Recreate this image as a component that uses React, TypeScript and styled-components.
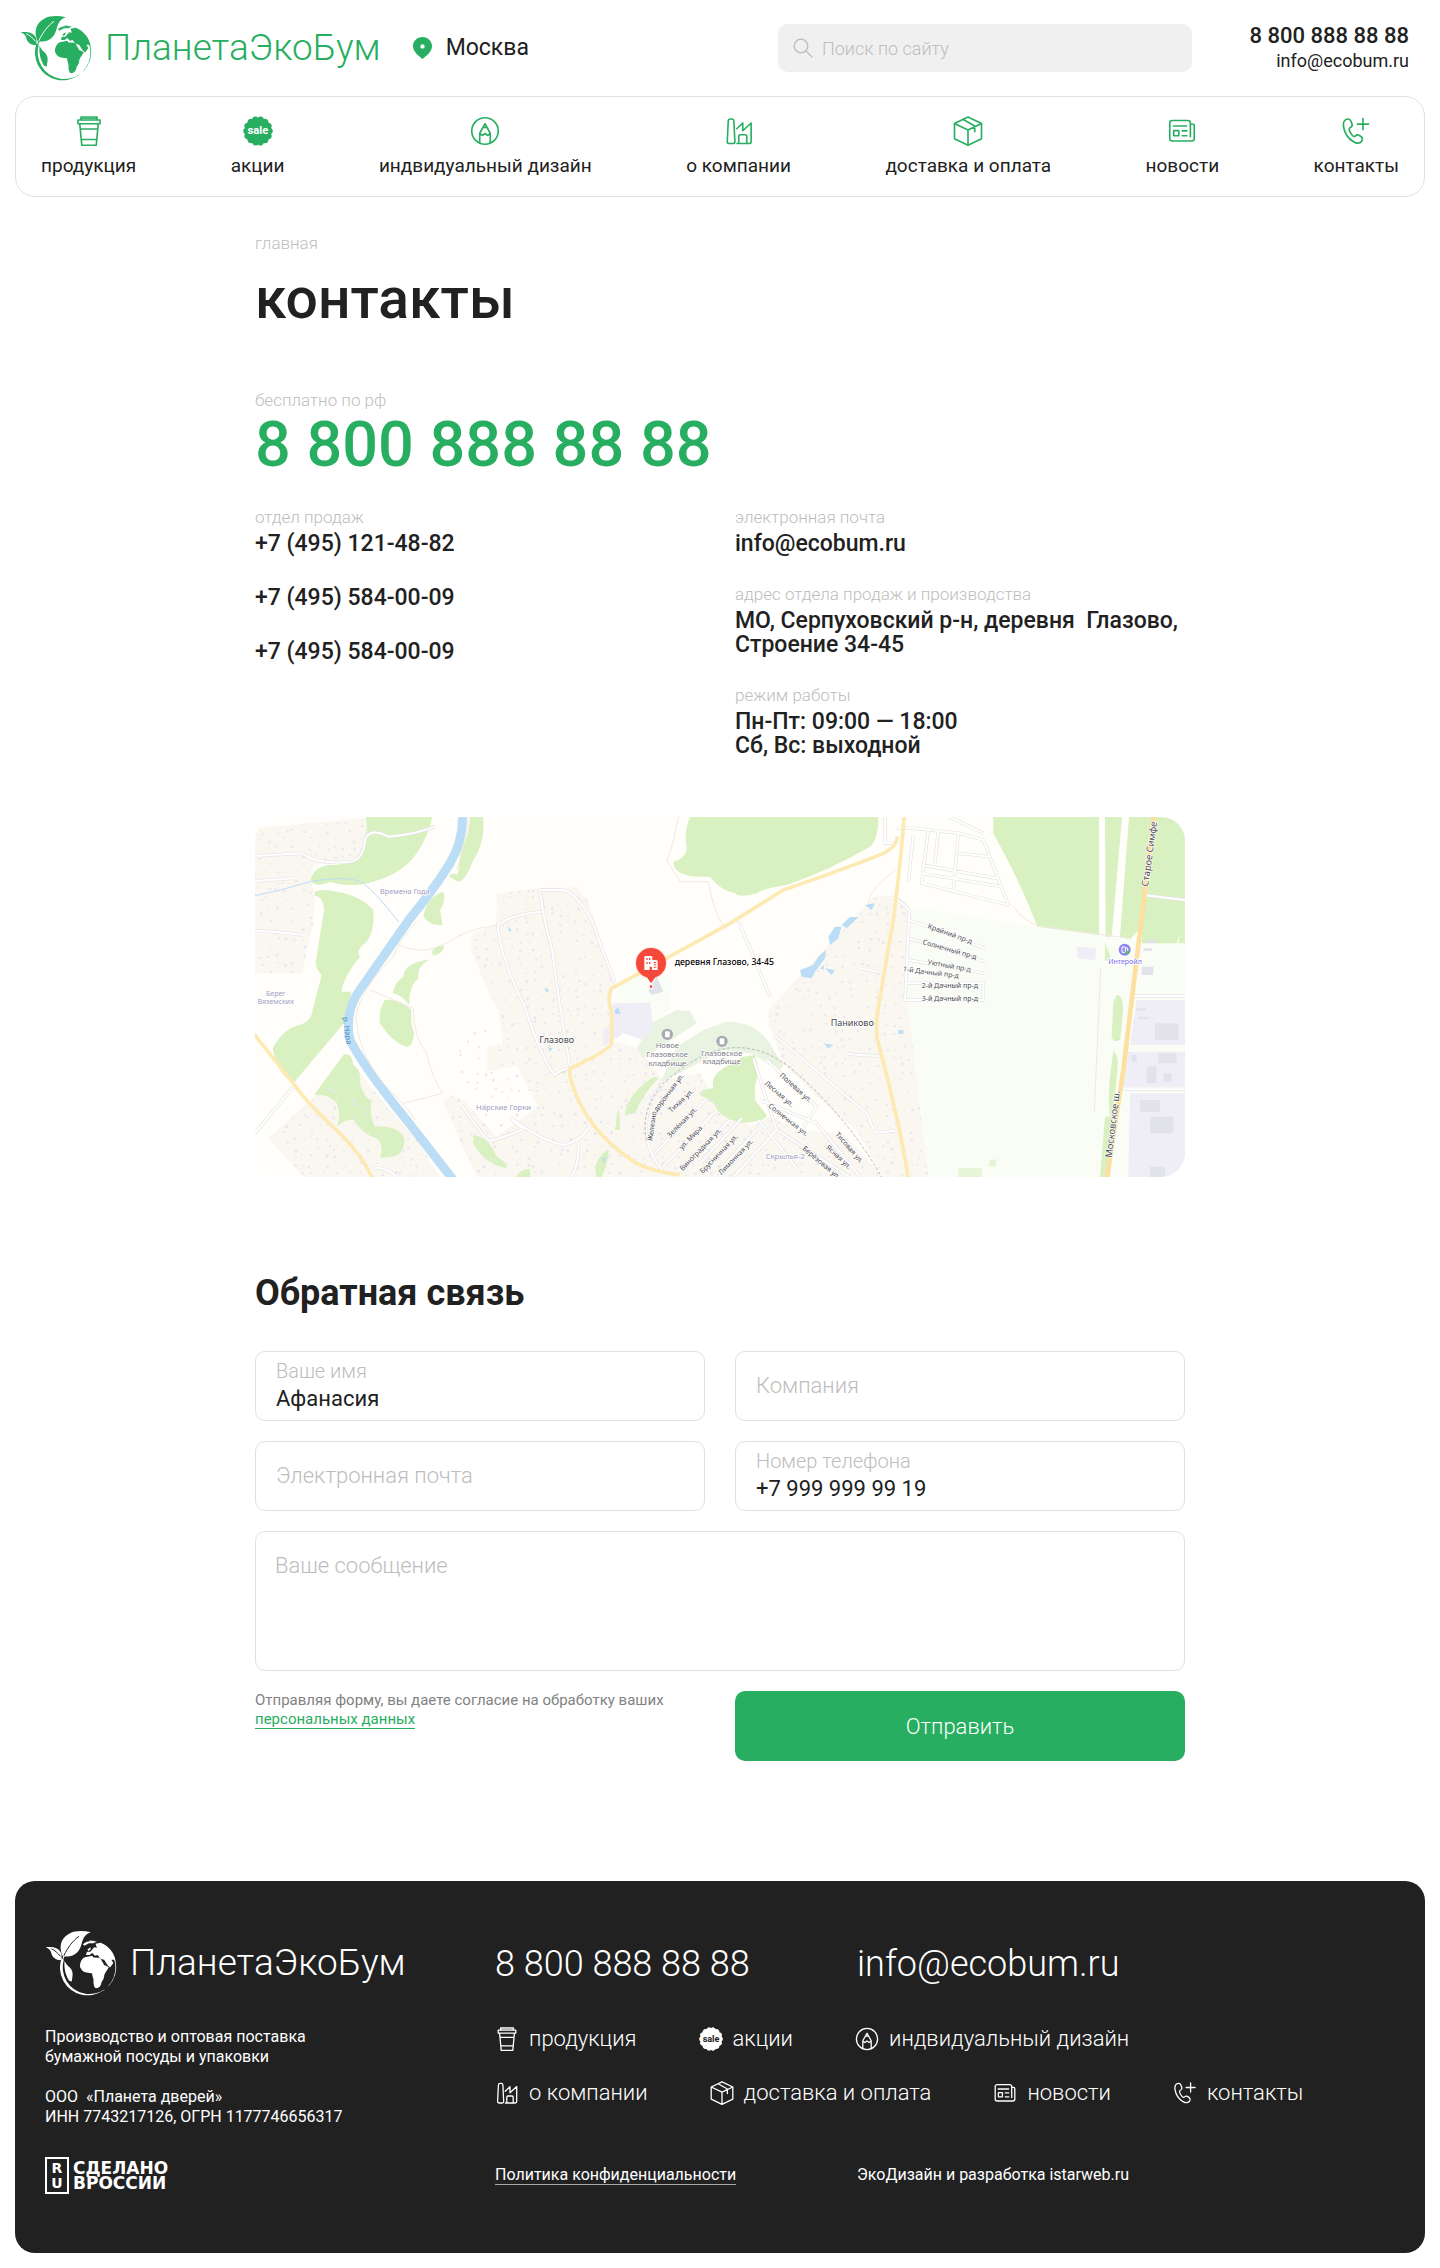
import React from "react";
import styled, { createGlobalStyle, css } from "styled-components";

const GREEN = "#27ae60";
const INK = "#212121";
const MUTED = "#bdbdbd";
const LINE = "#e0e0e0";

const GlobalStyle = createGlobalStyle`
  *, *::before, *::after { box-sizing: border-box; }
  body {
    margin: 0;
    background: #fff;
    color: ${INK};
    font-family: Roboto, "Noto Sans", sans-serif;
    font-weight: 300;
  }
  h1, h2, p, ul { margin: 0; padding: 0; }
  ul { list-style: none; }
  a { color: inherit; text-decoration: none; }
  input, textarea, button { font: inherit; color: inherit; }
`;

/* ---------- icons ---------- */

type IconName = "cup" | "sale" | "design" | "factory" | "box" | "news" | "phone";

const badgePath = (() => {
  const teeth = 14;
  const at = (i: number) => {
    const a = (i / teeth) * Math.PI * 2 - Math.PI / 2;
    return `${(12 + 10.7 * Math.cos(a)).toFixed(2)} ${(12 + 10.7 * Math.sin(a)).toFixed(2)}`;
  };
  let d = `M${at(0)}`;
  for (let i = 1; i <= teeth; i++) d += `A2.7 2.7 0 0 1 ${at(i)}`;
  return d + "Z";
})();

const IconSvg = styled.svg<{ $size: number }>`
  display: block;
  flex: none;
  width: ${(p) => p.$size}px;
  height: ${(p) => p.$size}px;
  fill: none;
  stroke: currentColor;
  stroke-width: 1.3;
  stroke-linejoin: round;
  stroke-linecap: round;
`;

const BadgeText = styled.text`
  font: 700 9px Roboto, sans-serif;
  stroke: none;
`;

function Icon({ name, size, ground }: { name: IconName; size: number; ground: string }) {
  return (
    <IconSvg $size={size} viewBox="0 0 24 24" aria-hidden="true">
      {name === "cup" && (
        <>
          <path d="M5.6 3.2V.8h12.8v2.4M3.2 3.2h17.6v3H3.2zM4.6 6.2l1.6 17.2h11.6l1.6-17.2M5 10.4h14M5.8 18.8h12.4" />
          <path d="M6 1.9h12" strokeWidth=".8" />
        </>
      )}
      {name === "sale" && (
        <>
          <path d={badgePath} fill="currentColor" stroke="none" />
          <BadgeText x="12" y="14.6" textAnchor="middle" fill={ground}>
            sale
          </BadgeText>
        </>
      )}
      {name === "design" && (
        <>
          <circle cx="12" cy="12" r="10.6" />
          <path d="M7.8 21.4v-7.6L12 6.2l4.2 7.6v7.6M7.8 14l2.1 1.5L12 14l2.1 1.5 2.1-1.5M10.6 9.2h2.8" />
        </>
      )}
      {name === "factory" && (
        <path d="M2.6 20.6 3.4 4.2Q3.5 2.4 4.9 2.4h1.4q1.5 0 1.6 1.8l.8 16.4q0 1.4-1.4 1.4H4q-1.4 0-1.4-1.4zM10.2 10.2 15 5.6v6.2l6.7-6.2v15q0 1.400-1.400 1.400H10.400M11.800 22v-5.800q0-1.200 1.200-1.200h4q1.200 0 1.200 1.200V22" />
      )}
      {name === "box" && (
        <path d="M12 .8 22.8 6v12.2L12 23.4 1.2 18.2V6zM1.2 6 12 11.2 22.8 6M12 11.2v12.2M8.2 2.8l9.2 5.2v4.6" />
      )}
      {name === "news" && (
        <>
          <path d="M18.7 16.5V5.6q0-2-2-2H4.2q-2 0-2 2V18q0 2 2 2h15.6q2 0 2-2V7.8q0-1.4-1.4-1.4h-1.700" />
          <path d="M5.2 8h10.4M5.4 11.7h4v4.1h-4zM12.2 11.9h3.6M12.2 15.8h3.6" />
        </>
      )}
      {name === "phone" && (
        <path d="M5.2 2.4C2.2 2.8 1.6 5.8 2 8.6c.8 4.6 4 9.6 8 12 2.6 1.6 5.4 1.6 6.8-.8.6-1.2.4-2.4-.6-3.2l-1.8-1.2c-1.2-.7-2-.4-2.8.5-.8.9-1.6.6-2.6-.5C7.6 13.8 6.8 12.2 6.6 11c-.2-1 .2-1.6 1.200-2 1-.5 1.400-1.400 1-2.600l-.8-2.200c-.5-1.300-1.400-2-2.800-1.800zM17.600 2v9M13.100 6.500h9" />
      )}
    </IconSvg>
  );
}

const menu: { icon: IconName; label: string }[] = [
  { icon: "cup", label: "продукция" },
  { icon: "sale", label: "акции" },
  { icon: "design", label: "индвидуальный дизайн" },
  { icon: "factory", label: "о компании" },
  { icon: "box", label: "доставка и оплата" },
  { icon: "news", label: "новости" },
  { icon: "phone", label: "контакты" },
];

/* ---------- logo ---------- */

const LogoLink = styled.a<{ $color: string }>`
  display: flex;
  align-items: center;
  gap: 12px;
  color: ${(p) => p.$color};
  font-size: 37px;
  line-height: 44px;
  white-space: nowrap;
`;

const LogoMark = styled.svg`
  display: block;
  flex: none;
  width: 73px;
  height: 66px;
`;

function Logo({ color, ground }: { color: string; ground: string }) {
  return (
    <LogoLink href="#" $color={color}>
      <LogoMark viewBox="134 210 219 200" fill="currentColor" aria-hidden="true">
        <path d="M183 296A84 84 0 1 0 268 240V242A81 81 0 1 1 190 300Z" />
        <path d="M192 304C197 312 200 318 208 324C216 332 218 342 216 352L214 366L206 364C196 348 190 328 192 304Z" />
        <path d="M239 322C238 302 250 290 262 291L276 288L280 293L298 294C304 300 308 308 312 316L326 322C322 332 312 342 312 350C312 360 304 364 303 374C300 384 294 388 285 386C281 380 279 372 280 364C280 354 275 350 276 342C268 338 248 344 239 322Z" />
        <path d="M270 276L282 262L290 264L286 252L302 249C328 260 344 282 347 306L342 300L334 300L340 310L330 324L322 316L312 300L302 298L292 286L284 288L276 280L268 286L257 286L260 276Z" />
        <path d="M248 253C258 244 272 241 290 245L280 250L266 250L252 258ZM262 268L272 262L270 270L264 274Z" />
        <path d="M188 292C174 266 178 236 206 221C226 211 250 212 272 217C254 222 248 236 244 252C238 276 222 294 192 290L186 304L183 304Z" />
        <path d="M135 262C156 260 178 264 183 284L183 302C164 302 154 292 152 280C150 270 144 266 135 262Z" />
        <path d="M190 288C202 262 218 242 236 229M180 290C172 280 162 271 152 267" fill="none" stroke={ground} strokeWidth="3" />
      </LogoMark>
      ПланетаЭкоБум
    </LogoLink>
  );
}

/* ---------- header ---------- */

const Page = styled.div`
  padding: 0 15px 15px;
`;

const Header = styled.header`
  display: flex;
  align-items: center;
  height: 96px;
  padding: 0 16px 0 5px;
`;

const City = styled.a`
  display: flex;
  align-items: center;
  gap: 14px;
  margin-left: 32px;
  font-size: 23px;
  font-weight: 400;
  line-height: 28px;
`;

const PinSvg = styled.svg`
  display: block;
  width: 19px;
  height: 22px;
`;

const Search = styled.label`
  display: flex;
  align-items: center;
  gap: 9px;
  width: 414px;
  height: 48px;
  margin-left: auto;
  padding: 0 15px;
  border-radius: 10px;
  background: #f0f0f0;
  color: ${MUTED};

  input {
    flex: 1;
    min-width: 0;
    border: 0;
    padding: 0;
    background: none;
    outline: none;
    font-size: 18px;
    color: ${INK};
  }
  input::placeholder { color: ${MUTED}; opacity: 1; }
`;

const HeaderContacts = styled.address`
  display: flex;
  flex-direction: column;
  align-items: flex-end;
  width: 217px;
  font-style: normal;
  font-size: 18px;
  font-weight: 400;
  line-height: 24px;

  a:first-child { font-size: 22px; font-weight: 500; line-height: 26px; }
`;

const Nav = styled.nav`
  border: 1px solid ${LINE};
  border-radius: 20px;
  padding: 19px 25px 15px;

  ul { display: flex; justify-content: space-between; }
  a {
    display: flex;
    flex-direction: column;
    align-items: center;
    gap: 5px;
    font-size: 19px;
    font-weight: 400;
    line-height: 30px;
  }
  svg { color: ${GREEN}; }
`;

/* ---------- contacts ---------- */

const Main = styled.main`
  max-width: 930px;
  margin: 0 auto;
  padding: 34px 0 120px;
`;

const Caption = styled.span`
  display: block;
  color: ${MUTED};
  font-size: 17px;
  line-height: 24px;
`;

const Title = styled.h1`
  margin-top: 12px;
  font-size: 57px;
  line-height: 64px;
  font-weight: 500;
`;

const Hotline = styled.a`
  display: block;
  color: ${GREEN};
  font-size: 63px;
  line-height: 66px;
  font-weight: 500;
`;

const HotlineBlock = styled.div`
  margin-top: 57px;
`;

const Columns = styled.div`
  display: grid;
  grid-template-columns: 1fr 1fr;
  gap: 30px;
  margin-top: 27px;
`;

const Stack = styled.div<{ $gap: number }>`
  display: flex;
  flex-direction: column;
  gap: ${(p) => p.$gap}px;
`;

const Value = styled.a`
  display: block;
  font-size: 23px;
  line-height: 24px;
  font-weight: 500;
  padding-top: 3px;
`;

const MapFrame = styled.div`
  margin-top: 59px;
  height: 360px;
  border-radius: 24px;
  overflow: hidden;
  background: #fffefa;
`;

const MapSvg = styled.svg`
  display: block;
  width: 100%;
  height: 100%;
  font-family: "Noto Sans", sans-serif;
  font-weight: 400;
`;

/* ---------- map ---------- */

const blocks = [
  "15,55 345,24 350,80 335,140 190,165 182,215 195,250 190,340 155,490 15,490",
  "740,250 870,234 980,232 1015,275 1095,520 1085,560 1080,690 1165,715 1240,810 1350,790 1400,880 1500,950 1560,940 1700,1101 680,1101 580,880 600,855 640,870 740,980 865,890 800,768 712,785 712,712 760,700 745,600 720,560 664,420 664,370 740,345",
  "55,985 190,862 320,770 345,810 420,900 500,990 570,1101 160,1101",
  "1555,600 1870,260 1940,255 1978,290 1970,560 2035,1101 1900,1101 1820,960 1700,860 1600,760 1556,640",
  "1480,960 1560,920 1650,960 1780,970 1900,1101 1400,1101",
];

const streets = [
  "M15 138 155 130Q200 165 300 155Q340 150 345 90Q360 50 415 80Q490 75 555 50M15 213 130 205M15 362Q80 365 160 375M870 240H940Q980 250 1025 330L1095 520M870 240Q880 330 905 410Q930 600 960 770M875 305Q800 310 743 343Q750 440 820 580Q880 760 915 795Q930 780 955 775",
  "M635 885Q690 970 720 993Q800 970 820 955Q780 930 785 925Q870 990 940 1005Q1000 990 1020 945M985 1000Q990 1050 965 1101M15 970 130 830M370 1075Q410 1070 440 1101M1240 820Q1180 880 1190 980Q1200 1040 1240 1085M1215 1030 1370 865M1240 1070 1400 900M1280 1085 1440 930",
  "M1905 21V100H1935M1940 55H1990L2130 70 2200 90 2275 285 2015 220 2035 60M1990 75 1975 215M2065 60 2055 160M2125 70 2110 240M2015 165 2240 205M2015 190 2255 230M2125 130 2220 140M2100 21 2200 70M1925 262Q1980 290 1978 310L1965 570H2200V520H1968M1978 330 2205 415M1978 385 2205 455M1975 450 2205 490",
  "M1830 475 1890 487M1790 732 1880 738M1572 675 1850 910 1875 968 1935 962M1460 320 1560 560M1510 745 1550 870 1580 960 1800 1101M1550 750 1700 890 1660 950M1530 870 1700 940 1830 1101M1525 930 1640 1075M2680 255 2805 270M2640 558H2805M2610 838H2805M1475 925 1350 1060M1520 960 1390 1101M1580 960 1450 1101",
].join("");

function houses() {
  let seed = 11;
  const rnd = () => {
    seed = (seed * 16807) % 2147483647;
    return seed / 2147483647;
  };
  let d = "";
  for (let y = 30; y < 1100; y += 25) {
    for (let x = 20; x < 2040; x += 25) {
      if (rnd() < 0.6) {
        const s = 4 + Math.round(rnd() * 4);
        d += `M${x + Math.round(rnd() * 16)} ${y + Math.round(rnd() * 16)}h${s}v${s}h-${s}z`;
      }
    }
  }
  return d;
}
const housePath = houses();

const tones = {
  dark: "#4a4a50",
  lilac: "#a09dc2",
  grey: "#7c7c86",
  black: "#000",
  violet: "#7a70e8",
  blue: "#4f8cc9",
};

const MapLabel = styled.text<{ $tone?: keyof typeof tones; $size?: number }>`
  font-size: ${(p) => p.$size ?? 21}px;
  fill: ${(p) => tones[p.$tone ?? "dark"]};
  paint-order: stroke;
  stroke: ${(p) => (p.$tone === "blue" ? "none" : "#fff")};
  stroke-width: 4px;
  ${(p) => p.$tone === "black" && css`font-weight: 500;`}
`;

function ContactMap() {
  return (
    <MapSvg viewBox="15 21 2790 1080" preserveAspectRatio="xMidYMid slice" role="img" aria-label="Карта проезда">
      <defs>
        <clipPath id="blocks">
          {blocks.map((b) => (
            <polygon key={b} points={b} />
          ))}
          <polygon points="640,640 730,640 720,760 800,768 865,890 740,975 620,780" />
        </clipPath>
      </defs>
      <path fill="#fffefa" d="M15 21h2790v1080H15z" />
      <path fill="#fafcf6" d="M1980 290 2365 350 2640 390 2805 400V1101H2035L1970 560ZM1100 530 1200 480 1265 500 1260 600 1200 630 1090 610Z" />
      <g fill="#faf7f1">
        {blocks.map((b) => (
          <polygon key={b} points={b} />
        ))}
      </g>
      <g fill="#d9f0c1">
        <path d="M348 21H547Q535 80 500 130Q460 190 370 215Q300 235 240 215Q195 235 182 210Q190 170 240 165Q320 165 340 130Q340 80 350 65Z" />
        <path d="M660 21H700Q705 100 670 150Q645 215 625 215L598 200Q600 185 622 195Q630 160 632 115Q655 90 660 21Z" />
        <path d="M195 245Q215 235 260 245Q330 255 370 300Q375 360 350 395Q315 420 330 440Q280 500 275 545L305 545Q290 590 285 635L130 820Q80 790 68 715Q90 670 130 650Q185 640 188 600L215 495Q190 470 200 440L222 300Q220 260 195 258Z" />
        <path d="M580 245Q590 270 570 300L578 345Q545 350 520 320Q530 260 580 245ZM545 425Q560 405 582 408Q580 430 550 437ZM540 448Q500 470 505 505Q475 530 478 585Q455 555 428 550Q435 515 460 500Q460 460 540 448Z" />
        <path d="M405 570Q450 565 485 600Q480 640 492 665Q490 710 470 710Q430 700 390 640Q385 600 405 570Z" />
        <path d="M192 855L280 735Q305 725 310 765Q335 780 330 820Q345 870 365 870Q355 910 375 950Q445 945 463 985Q465 1030 430 1040L390 1043Q405 1010 380 985Q340 975 310 930Q290 925 260 950Q275 915 260 880Q235 850 192 855Z" />
        <path d="M670 975Q720 985 740 1040L770 1060V1075Q700 1060 670 1000ZM800 1101Q810 1075 840 1078V1101ZM1040 1101Q1025 1050 1075 1018Q1080 1040 1055 1101ZM1190 815Q1215 795 1225 805Q1180 850 1155 910L1125 915Q1130 860 1190 815ZM1105 890L1110 930 1110 960 1095 960ZM920 790 950 775 945 790Z" />
        <path d="M1320 21H1885Q1885 90 1860 110Q1740 180 1610 225Q1540 235 1520 250Q1470 265 1455 250Q1410 240 1380 200Q1270 205 1270 155Q1310 145 1310 110Q1300 70 1320 21Z" />
        <path d="M1480 740 1515 735Q1530 780 1515 830V870L1550 915Q1550 935 1475 938Q1415 930 1390 880L1350 855Q1340 840 1390 835Q1380 800 1420 775Z" />
        <path d="M2230 21H2547V375L2362 350Q2320 235 2230 70ZM2565 21H2616L2585 380H2567ZM2637 21H2805V400H2785L2790 370 2780 400H2675L2675 350 2640 388 2610 380Z" />
        <path d="M2600 555Q2622 550 2618 620L2610 690Q2590 700 2585 680L2590 580ZM2590 725Q2610 730 2600 800L2590 900 2580 1101H2550L2565 920H2580Q2570 850 2590 725ZM2565 400 2582 440 2565 455Z" />
        <path opacity=".6" d="M2125 1075H2195V1101H2125ZM2220 1050 2240 1048 2235 1070 2215 1068Z" />
      </g>
      <path fill="#e9f3e1" d="M1160 715 1210 635 1280 600 1320 603 1340 640 1180 745ZM1230 820 1280 710 1360 660 1430 635Q1530 635 1570 720L1600 765 1590 780 1500 730 1420 720Z" />
      <path fill="#efeef6" d="M1088 580 1200 578 1210 650 1180 690 1120 670 1060 710 1060 660 1085 640ZM2660 570H2805V705H2640ZM2630 725H2805V830H2615ZM2640 850H2805V1101H2635ZM2480 410 2540 415 2535 450 2482 445Z" />
      <path fill="#e2e3ea" d="M2715 640H2785V690H2715ZM2725 730H2780V760H2725ZM2690 770 2720 768 2718 820 2690 820ZM2670 870H2730V905H2670ZM2700 920H2770V970H2700V1070H2745V1101H2700ZM1195 540 1220 500 1240 545 1205 555ZM2675 470H2710V495H2675ZM2660 595H2690V602H2660ZM2665 620H2695V628H2665ZM2645 735H2660V755H2645ZM2740 790H2765V815H2740ZM2690 390H2720V400H2690ZM2680 415H2705V423H2680Z" />
      <path fill="#e9e8f0" d={housePath} clipPath="url(#blocks)" />
      <g fill="#bbddf5">
        <path d="M1650 480 1690 465 1705 440 1728 420 1725 445 1695 485 1685 505 1655 500ZM1735 380 1755 350 1775 350 1765 385 1740 405ZM1775 345 1800 320 1825 322 1790 355ZM1845 285 1875 280 1865 300ZM1710 475 1722 465 1720 480ZM1725 475 1755 480 1745 495ZM1945 660H1960V672H1945ZM1720 700 1750 705 1735 715ZM1095 600 1105 590 1112 612 1095 612ZM1055 1045 1068 1040 1062 1060ZM893 712 908 715 900 725ZM883 532 897 540 890 550ZM773 350 785 360 778 367Z" />
      </g>
      <g fill="none" stroke="#bbddf5">
        <path strokeWidth="27" d="M637 21Q640 90 600 160Q550 240 480 325L340 525Q280 600 300 690Q340 770 470 930L610 1110" />
        <path strokeWidth="3" d="M15 257Q100 240 180 215Q300 195 340 220Q380 250 447 337" />
      </g>
      <g fill="none" stroke="#f3e8df" strokeWidth="3">
        <path d="M500 335Q440 400 430 440Q330 540 318 620Q320 720 400 820Q480 900 495 930M445 405Q510 430 550 415L600 395Q640 360 740 345M360 540 490 595Q490 680 530 730Q545 800 578 850L460 880M655 21Q650 90 620 180M1285 21Q1270 110 1250 150L1290 215H1375Q1390 300 1418 345M1935 180Q1850 250 1855 280M2285 285Q2330 340 2365 348L2640 385M2552 475 2533 905" />
      </g>
      <g fill="none" strokeLinejoin="round">
        <path d={streets} stroke="#e6e4e4" strokeWidth="10" />
        <path d={streets} stroke="#fff" strokeWidth="6" />
      </g>
      <path d="M1190 990Q1170 900 1240 820Q1340 730 1430 715Q1540 700 1640 790Q1800 930 1900 1110" fill="none" stroke="#b5b5ba" strokeWidth="3" strokeDasharray="9 6" />
      <g fill="none" stroke="#fdeab2" strokeWidth="11">
        <path d="M10 670 130 820Q170 880 270 970Q340 1040 370 1110M1290 1095Q1210 1085 1160 1060Q1000 960 960 800V775Q1080 720 1085 700V610Q1070 560 1085 535L1440 340 1600 240Q1830 160 1900 130Q1940 110 1943 80" />
        <path d="M1962 21Q1955 130 1930 330L1880 620V680Q1955 960 1975 1110" />
      </g>
      <path d="M2712 21 2685 240Q2665 400 2620 780L2570 1110" fill="none" stroke="#fde0a0" strokeWidth="14" />

      <MapLabel x="390" y="251" $tone="lilac" $size={22}>Времена Года</MapLabel>
      <MapLabel x="77" y="557" $tone="lilac" textAnchor="middle">Берег</MapLabel>
      <MapLabel x="77" y="583" $tone="lilac" textAnchor="middle">Вяземских</MapLabel>
      <MapLabel x="678" y="899" $tone="lilac" $size={23}>Нарские Горки</MapLabel>
      <MapLabel x="1547" y="1046" $tone="lilac" $size={23}>Скрылья-2</MapLabel>
      <MapLabel $tone="blue" $size={23} transform="translate(278 622) rotate(82)">р. Нара</MapLabel>
      <MapLabel x="868" y="698" $size={27}>Глазово</MapLabel>
      <MapLabel x="1742" y="649" $size={27}>Паниково</MapLabel>
      <MapLabel x="1252" y="715" $tone="grey" $size={23} textAnchor="middle">Новое</MapLabel>
      <MapLabel x="1252" y="741" $tone="grey" $size={23} textAnchor="middle">Глазовское</MapLabel>
      <MapLabel x="1252" y="767" $tone="grey" $size={23} textAnchor="middle">кладбище</MapLabel>
      <MapLabel x="1415" y="737" $tone="grey" $size={23} textAnchor="middle">Глазовское</MapLabel>
      <MapLabel x="1415" y="763" $tone="grey" $size={23} textAnchor="middle">кладбище</MapLabel>
      <MapLabel transform="translate(2032 354) rotate(20)">Крайний пр-д</MapLabel>
      <MapLabel transform="translate(2017 402) rotate(16)">Солнечный пр-д</MapLabel>
      <MapLabel transform="translate(2032 463) rotate(10)">Уютный пр-д</MapLabel>
      <MapLabel transform="translate(1958 484) rotate(7)">1-й Дачный пр-д</MapLabel>
      <MapLabel x="2015" y="533">2-й Дачный пр-д</MapLabel>
      <MapLabel x="2015" y="574">3-й Дачный пр-д</MapLabel>
      <MapLabel transform="translate(1207 994) rotate(-82)">Железно</MapLabel>
      <MapLabel transform="translate(1221 906) rotate(-53)">дорожная ул.</MapLabel>
      <MapLabel transform="translate(1264 908) rotate(-42)">Тихая ул.</MapLabel>
      <MapLabel transform="translate(1260 984) rotate(-46)">Зелёная ул.</MapLabel>
      <MapLabel transform="translate(1296 1020) rotate(-46)">ул. Мира</MapLabel>
      <MapLabel transform="translate(1298 1084) rotate(-46)">Виноградная ул.</MapLabel>
      <MapLabel transform="translate(1358 1092) rotate(-46)">Брусничная ул.</MapLabel>
      <MapLabel transform="translate(1414 1096) rotate(-46)">Лимонная ул.</MapLabel>
      <MapLabel transform="translate(1588 798) rotate(42)">Полевая ул.</MapLabel>
      <MapLabel transform="translate(1543 822) rotate(41)">Лесная ул.</MapLabel>
      <MapLabel transform="translate(1553 890) rotate(38)">Солнечная ул.</MapLabel>
      <MapLabel transform="translate(1755 974) rotate(49)">Тисовая ул.</MapLabel>
      <MapLabel transform="translate(1727 1014) rotate(43)">Ясная ул.</MapLabel>
      <MapLabel transform="translate(1656 1018) rotate(40)">Берёзовая ул.</MapLabel>
      <MapLabel $size={28} transform="translate(2694 230) rotate(-82)">Старое Симфе</MapLabel>
      <MapLabel $size={28} transform="translate(2585 1044) rotate(-83)">Московское ш.</MapLabel>
      <MapLabel x="2625" y="461" $tone="violet" textAnchor="middle">Интеройл</MapLabel>
      <circle cx="2624" cy="419" r="18" fill="#8f86f2" />
      <path d="M2616 411h10v16h-10zM2626 414h7v9" fill="none" stroke="#fff" strokeWidth="3" />
      <circle cx="2631" cy="427" r="5" fill="#4ccb3c" />
      {[[1252, 673], [1416, 694]].map(([x, y]) => (
        <g key={x}>
          <circle cx={x} cy={y} r="17" fill="#a6a9b2" />
          <path d={`M${x - 7} ${y + 9}v-15q0-3 3-3h8q3 0 3 3v15z`} fill="#fff" />
        </g>
      ))}
      <path d="M1190 500h27l-14 20z" fill="#f4483b" />
      <circle cx="1203" cy="459" r="48" fill="#f4483b" opacity=".15" />
      <circle cx="1203" cy="459" r="45" fill="#f4483b" />
      <path fill="#fff" fillRule="evenodd" d="M1183 480V442q0-4 4-4h16q4 0 4 4v8h11q5 0 5 5v25h-17v-10h-7v10zM1189 444v6h4v-6zM1197 444v6h4v-6zM1189 456v6h4v-6zM1197 456v6h4v-6zM1211 456v3h8v-3zM1211 463v3h8v-3zM1211 470v3h8v-3z" />
      <circle cx="1203" cy="530" r="7" fill="#fff" />
      <circle cx="1203" cy="530" r="4" fill="#f4483b" />
      <MapLabel x="1274" y="465" $tone="black" $size={26}>деревня Глазово, 34-45</MapLabel>
    </MapSvg>
  );
}

/* ---------- form ---------- */

const FormTitle = styled.h2`
  margin-top: 94px;
  font-size: 36px;
  line-height: 44px;
  font-weight: 700;
`;

const Form = styled.form`
  display: grid;
  grid-template-columns: 1fr 1fr;
  gap: 20px 30px;
  margin-top: 36px;
`;

const boxed = css`
  border: 1px solid ${LINE};
  border-radius: 10px;
  background: #fff;
`;

const Field = styled.label`
  ${boxed}
  display: flex;
  flex-direction: column;
  justify-content: center;
  height: 70px;
  padding: 0 20px;

  span { color: ${MUTED}; font-size: 20px; line-height: 26px; }
  input {
    width: 100%;
    border: 0;
    padding: 0;
    outline: none;
    background: none;
    font-size: 22px;
    font-weight: 400;
    line-height: 30px;
  }
  input::placeholder { color: ${MUTED}; opacity: 1; font-weight: 300; }
`;

const Message = styled.textarea`
  ${boxed}
  grid-column: 1 / -1;
  display: block;
  width: 100%;
  height: 140px;
  padding: 19px;
  outline: none;
  resize: none;
  font-size: 22px;
  line-height: 30px;
  &::placeholder { color: ${MUTED}; opacity: 1; }
`;

const Consent = styled.p`
  color: #828282;
  font-size: 15px;
  font-weight: 400;
  line-height: 19px;

  a { color: ${GREEN}; border-bottom: 1px solid ${GREEN}; }
`;

const Submit = styled.button`
  height: 70px;
  border: 0;
  border-radius: 10px;
  background: ${GREEN};
  color: #fff;
  font-size: 22px;
  cursor: pointer;
`;

/* ---------- footer ---------- */

const Footer = styled.footer`
  display: grid;
  grid-template-columns: 450px 1fr;
  padding: 49px 30px 59px;
  border-radius: 20px;
  background: ${INK};
  color: #fff;
`;

const Company = styled.div`
  display: flex;
  flex-direction: column;
  font-size: 16px;
  font-weight: 400;
  line-height: 20px;

  ${LogoLink} { font-weight: 300; }
  p { margin-top: 31px; }
  p + p { margin-top: 20px; }
`;

const MadeIn = styled.div`
  display: flex;
  align-items: center;
  gap: 4px;
  margin-top: 30px;
  font: 700 17px/15px "DejaVu Sans", sans-serif;
`;

const RuMark = styled.span`
  display: flex;
  flex-direction: column;
  align-items: center;
  justify-content: center;
  width: 24px;
  height: 37px;
  border: 2px solid #fff;
  font-size: 14px;
`;

const FooterMain = styled.div`
  display: flex;
  flex-direction: column;
`;

const Pair = styled.div<{ $size: number; $top: number; $line: number; $weight?: number }>`
  display: grid;
  grid-template-columns: 362px 1fr;
  margin-top: ${(p) => p.$top}px;
  font-size: ${(p) => p.$size}px;
  font-weight: ${(p) => p.$weight ?? 300};
  line-height: ${(p) => p.$line}px;
`;

const FooterMenu = styled.ul`
  display: flex;
  flex-wrap: wrap;
  gap: 24px 62px;
  max-width: 830px;
  margin-top: 38px;
  font-size: 22px;
  line-height: 30px;

  a { display: flex; align-items: center; gap: 10px; }
`;

const Underlined = styled.a`
  border-bottom: 1px solid #a8a8a8;
`;

export default function App() {
  return (
    <>
      <GlobalStyle />
      <Page>
        <Header>
          <Logo color={GREEN} ground="#fff" />
          <City href="#">
            <PinSvg viewBox="0 0 19 22" aria-hidden="true">
              <path fill={GREEN} fillRule="evenodd" d="M9.5 0C4.2 0 0 4 0 9c0 6 5.5 9.5 9.5 13C13.5 18.5 19 15 19 9c0-5-4.2-9-9.5-9zm0 7.2a2.2 2.2 0 1 1 0 4.4 2.2 2.2 0 0 1 0-4.400z" />
            </PinSvg>
            Москва
          </City>
          <Search>
            <IconSvg $size={20} viewBox="0 0 20 20" aria-hidden="true">
              <circle cx="8" cy="8" r="6.8" />
              <path d="m13 13 6 6" />
            </IconSvg>
            <input type="search" aria-label="Поиск по сайту" placeholder="Поиск по сайту" />
          </Search>
          <HeaderContacts>
            <a href="tel:88008888888">8 800 888 88 88</a>
            <a href="mailto:info@ecobum.ru">info@ecobum.ru</a>
          </HeaderContacts>
        </Header>

        <Nav>
          <ul>
            {menu.map((m) => (
              <li key={m.label}>
                <a href="#">
                  <Icon name={m.icon} size={30} ground="#fff" />
                  {m.label}
                </a>
              </li>
            ))}
          </ul>
        </Nav>

        <Main>
          <Caption as="a" href="#">главная</Caption>
          <Title>контакты</Title>

          <HotlineBlock>
            <Caption>бесплатно по рф</Caption>
            <Hotline href="tel:88008888888">8 800 888 88 88</Hotline>
          </HotlineBlock>

          <Columns>
            <Stack $gap={27}>
              <div>
                <Caption>отдел продаж</Caption>
                <Value href="tel:+74951214882">+7 (495) 121-48-82</Value>
              </div>
              <Value href="tel:+74955840009">+7 (495) 584-00-09</Value>
              <Value href="tel:+74955840009">+7 (495) 584-00-09</Value>
            </Stack>
            <Stack $gap={26}>
              <div>
                <Caption>электронная почта</Caption>
                <Value href="mailto:info@ecobum.ru">info@ecobum.ru</Value>
              </div>
              <div>
                <Caption>адрес отдела продаж и производства</Caption>
                <Value as="p">
                  МО, Серпуховский р-н, деревня&nbsp; Глазово,
                  <br />
                  Строение 34-45
                </Value>
              </div>
              <div>
                <Caption>режим работы</Caption>
                <Value as="p">
                  Пн-Пт: 09:00 — 18:00
                  <br />
                  Сб, Вс: выходной
                </Value>
              </div>
            </Stack>
          </Columns>

          <MapFrame>
            <ContactMap />
          </MapFrame>

          <FormTitle>Обратная связь</FormTitle>
          <Form onSubmit={(e) => e.preventDefault()}>
            <Field>
              <span>Ваше имя</span>
              <input name="name" defaultValue="Афанасия" />
            </Field>
            <Field>
              <input name="company" aria-label="Компания" placeholder="Компания" />
            </Field>
            <Field>
              <input name="email" type="email" aria-label="Электронная почта" placeholder="Электронная почта" />
            </Field>
            <Field>
              <span>Номер телефона</span>
              <input name="phone" type="tel" defaultValue="+7 999 999 99 19" />
            </Field>
            <Message name="message" aria-label="Ваше сообщение" placeholder="Ваше сообщение" />
            <Consent>
              Отправляя форму, вы даете согласие на обработку ваших
              <br />
              <a href="#">персональных данных</a>
            </Consent>
            <Submit type="submit">Отправить</Submit>
          </Form>
        </Main>

        <Footer>
          <Company>
            <Logo color="#fff" ground={INK} />
            <p>
              Производство и оптовая поставка
              <br />
              бумажной посуды и упаковки
            </p>
            <p>
              ООО&nbsp; «Планета дверей»
              <br />
              ИНН 7743217126, ОГРН 1177746656317
            </p>
            <MadeIn>
              <RuMark>
                <span>R</span>
                <span>U</span>
              </RuMark>
              <span>
                СДЕЛАНО
                <br />
                ВРОССИИ
              </span>
            </MadeIn>
          </Company>
          <FooterMain>
            <Pair $size={36} $top={12} $line={44}>
              <div>
                <a href="tel:88008888888">8 800 888 88 88</a>
              </div>
              <div>
                <a href="mailto:info@ecobum.ru">info@ecobum.ru</a>
              </div>
            </Pair>
            <FooterMenu>
              {menu.map((m) => (
                <li key={m.label}>
                  <a href="#">
                    <Icon name={m.icon} size={24} ground={INK} />
                    {m.label}
                  </a>
                </li>
              ))}
            </FooterMenu>
            <Pair $size={16} $top={57} $line={20} $weight={400}>
              <div>
                <Underlined href="#">Политика конфиденциальности</Underlined>
              </div>
              <div>ЭкоДизайн и разработка istarweb.ru</div>
            </Pair>
          </FooterMain>
        </Footer>
      </Page>
    </>
  );
}
